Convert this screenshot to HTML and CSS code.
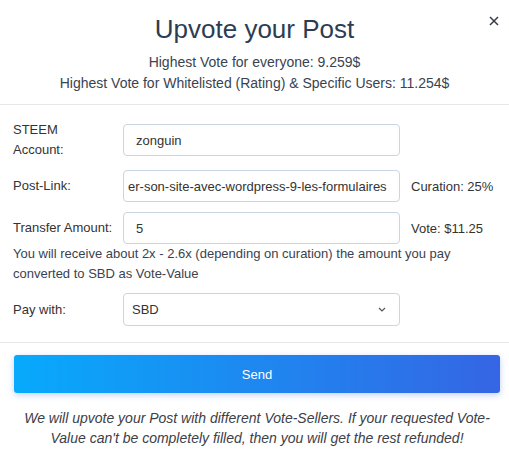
FILE: index.html
```html
<!DOCTYPE html>
<html lang="en">
<head>
    <meta charset="UTF-8">
    <meta name="viewport" content="width=device-width, initial-scale=1.0">
    <title>Upvote your Post</title>
    <link rel="stylesheet" href="styles.css">
</head>
<body>
    <div class="modal">
        <div class="modal-header">
            <button class="close" type="button" aria-label="Close">
                <svg width="10" height="10" viewBox="0 0 10 10">
                    <path d="M1 1 L9 9 M9 1 L1 9" stroke="#333a45" stroke-width="1.5" fill="none"/>
                </svg>
            </button>
            <h2 class="title">Upvote your Post</h2>
            <p class="sub">Highest Vote for everyone: 9.259$</p>
            <p class="sub">Highest Vote for Whitelisted (Rating) &amp; Specific Users: 11.254$</p>
        </div>

        <form class="modal-body">
            <div class="row">
                <label class="label">STEEM<br>Account:</label>
                <input class="field" type="text" value="zonguin">
            </div>
            <div class="row">
                <label class="label">Post-Link:</label>
                <input class="field field-link" type="text" value="er-son-site-avec-wordpress-9-les-formulaires">
                <span class="side">Curation: 25%</span>
            </div>
            <div class="row">
                <label class="label">Transfer Amount:</label>
                <input class="field" type="text" value="5">
                <span class="side">Vote: $11.25</span>
            </div>
            <p class="help">You will receive about 2x - 2.6x (depending on curation) the amount you pay converted to SBD as Vote-Value</p>
            <div class="row row-select">
                <label class="label">Pay with:</label>
                <div class="select-wrap">
                    <select class="field select">
                        <option>SBD</option>
                        <option>STEEM</option>
                    </select>
                    <svg class="chevron" width="8" height="5" viewBox="0 0 8 5">
                        <path d="M1 1 L4 4 L7 1" stroke="#555" stroke-width="1.2" fill="none"/>
                    </svg>
                </div>
            </div>
        </form>

        <div class="modal-footer">
            <button class="send" type="button">Send</button>
            <p class="note">We will upvote your Post with different Vote-Sellers. If your requested Vote-Value can't be completely filled, then you will get the rest refunded!</p>
        </div>
    </div>
</body>
</html>
```

FILE: styles.css
```css
body {
    margin: 0;
    background-color: #ffffff;
    font-family: "Liberation Sans", Arial, sans-serif;
    font-size: 13px;
    color: #333;
}

.modal {
    width: 509px;
}

/* header */
.modal-header {
    position: relative;
    padding: 13px 10px 10px;
    text-align: center;
    border-bottom: 1px solid #e6e8eb;
}

.close {
    position: absolute;
    top: 14px;
    right: 10px;
    border: none;
    background: none;
    padding: 0;
    cursor: pointer;
}

.title {
    margin: 0 0 7px;
    font-size: 26px;
    font-weight: normal;
    line-height: 32px;
    color: #2c3d52;
}

.sub {
    margin: 0;
    font-size: 14px;
    line-height: 21px;
    color: #3a4350;
}

/* form */
.modal-body {
    padding: 15px 13px 16px;
    border-bottom: 1px solid #e6e8eb;
}

.row {
    display: flex;
    align-items: center;
    margin-bottom: 10px;
}

.label {
    width: 110px;
    flex-shrink: 0;
    line-height: 20px;
    color: #333;
}

.field {
    width: 277px;
    height: 32px;
    box-sizing: border-box;
    padding: 0 12px;
    border: 1px solid #c9d5e1;
    border-radius: 4px;
    font-family: inherit;
    font-size: 13px;
    color: #333;
    background: #fff;
}

.field-link {
    padding-left: 4px;
}

.side {
    margin-left: 11px;
    color: #333;
}

.help {
    margin: -10px 0 9px;
    line-height: 20px;
    color: #3a4350;
}

.row-select {
    margin-bottom: 0;
}

.select-wrap {
    position: relative;
}

.select {
    display: block;
    height: 33px;
    padding-left: 8px;
    appearance: none;
    -webkit-appearance: none;
}

.chevron {
    position: absolute;
    right: 14px;
    top: 14px;
    pointer-events: none;
}

/* footer */
.modal-footer {
    padding: 12px 9px 0 14px;
    text-align: center;
}

.send {
    display: block;
    width: 100%;
    height: 38px;
    border: none;
    border-radius: 3px;
    background: linear-gradient(to right, #07aafc, #3565e4);
    box-shadow: 0 2px 6px rgba(60, 100, 220, 0.3);
    color: #fff;
    font-family: inherit;
    font-size: 13px;
    cursor: pointer;
}

.note {
    margin: 15px 0 0;
    font-style: italic;
    font-size: 14px;
    line-height: 20px;
    color: #3c4048;
}
```
